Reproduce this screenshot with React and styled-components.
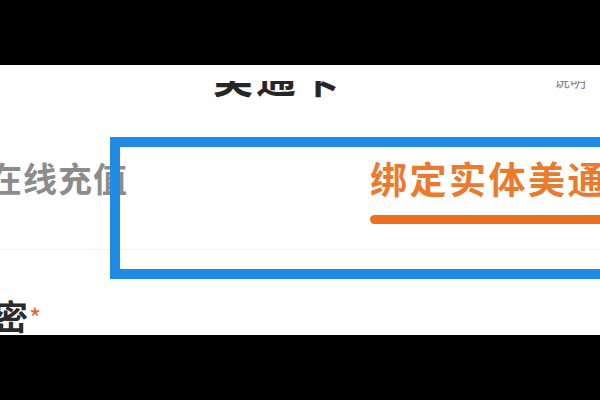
import React from 'react'
import styled, { createGlobalStyle } from 'styled-components'

const GlobalStyle = createGlobalStyle`
  html, body {
    margin: 0;
    padding: 0;
    background: #000;
  }
  body {
    font-family: "Noto Sans CJK SC", "Noto Sans", sans-serif;
  }
`

const Frame = styled.div`
  width: 600px;
  height: 400px;
  display: flex;
  flex-direction: column;
  background: #000;
  overflow: hidden;
`

const Letterbox = styled.div`
  flex: 0 0 65px;
  background: #000;
`

const Screen = styled.div`
  flex: 0 0 270px;
  position: relative;
  background: #fff;
  overflow: hidden;
`

const HeaderClip = styled.div`
  margin-top: 16px;
  height: 19px;
  overflow: hidden;
  display: flex;
  align-items: flex-start;
  padding-left: 213px;
`

const Title = styled.div`
  margin-top: -25px;
  font-size: 40px;
  line-height: 40px;
  font-weight: 700;
  letter-spacing: 3px;
  color: #262626;
`

const HeaderAction = styled.div`
  margin-left: auto;
  margin-right: 14px;
  margin-top: -11px;
  font-size: 16px;
  line-height: 20px;
  color: #8a8a8a;
`

const TabBar = styled.div`
  display: flex;
  align-items: flex-start;
  gap: 242px;
  height: 150px;
  box-sizing: border-box;
  padding-top: 60px;
  border-bottom: 1px solid #f1f1f1;
`

const Tab = styled.div`
  display: flex;
  flex-direction: column;
  flex: 0 0 auto;
  margin-left: ${p => (p.$first ? '-12px' : '0')};
`

const TabLabel = styled.span`
  font-size: ${p => (p.$active ? '37px' : '34px')};
  line-height: 36px;
  font-weight: 700;
  letter-spacing: ${p => (p.$active ? '2.5px' : '1px')};
  color: ${p => (p.$active ? '#ea7a2c' : '#8c8c8c')};
  white-space: nowrap;
`

const Underline = styled.div`
  margin-top: 19px;
  height: 9px;
  width: 240px;
  border-radius: 5px;
  background: #ec7020;
`

const FieldRow = styled.div`
  display: flex;
  align-items: flex-start;
  margin-top: 48px;
  margin-left: -6px;
`

const FieldLabel = styled.span`
  font-size: 34px;
  line-height: 36px;
  font-weight: 700;
  color: #2b2b2b;
`

const Required = styled.span`
  font-size: 26px;
  line-height: 26px;
  margin-top: 6px;
  margin-left: 1px;
  color: #e8603a;
`

const Highlight = styled.div`
  position: absolute;
  top: 72px;
  left: 110px;
  width: 520px;
  height: 142px;
  box-sizing: border-box;
  border: 10px solid #1f8be4;
  pointer-events: none;
`

export default function App() {
  return (
    <>
      <GlobalStyle />
      <Frame>
        <Letterbox />
        <Screen>
          <HeaderClip>
            <Title>美通卡</Title>
            <HeaderAction>说明</HeaderAction>
          </HeaderClip>
          <TabBar>
            <Tab $first>
              <TabLabel>在线充值</TabLabel>
            </Tab>
            <Tab>
              <TabLabel $active>绑定实体美通卡</TabLabel>
              <Underline />
            </Tab>
          </TabBar>
          <FieldRow>
            <FieldLabel>密</FieldLabel>
            <Required>*</Required>
          </FieldRow>
          <Highlight />
        </Screen>
        <Letterbox />
      </Frame>
    </>
  )
}
